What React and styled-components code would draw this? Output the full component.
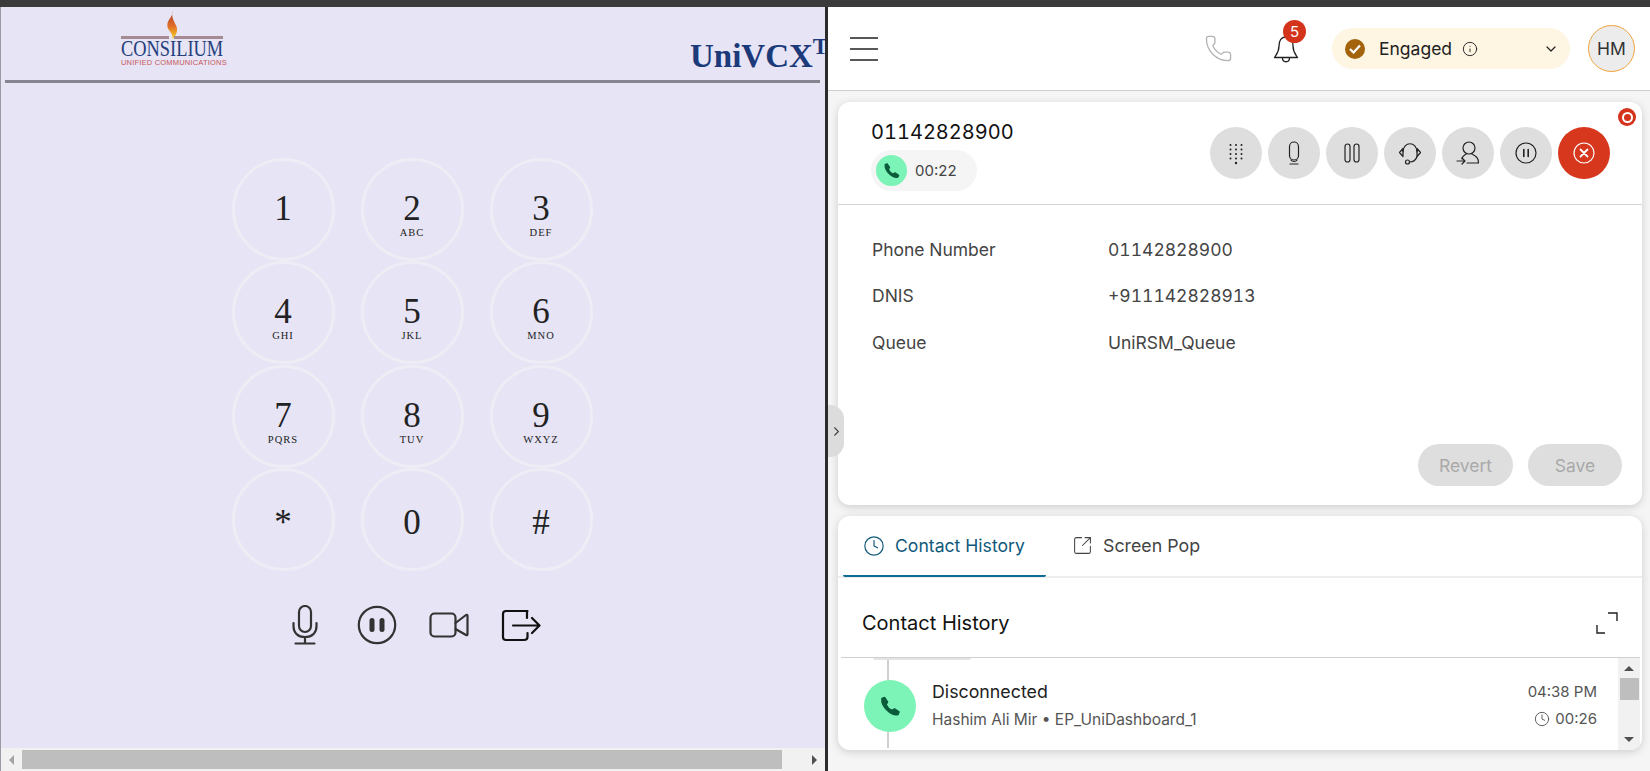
import React from 'react'
import styled, { createGlobalStyle } from 'styled-components'
import { Phone, Info, ChevronDown, Clock, SquareArrowOutUpRight, ChevronRight } from 'lucide-react'

const GlobalStyle = createGlobalStyle`
  html, body { margin: 0; padding: 0; height: 100%; overflow: hidden; }
  * { box-sizing: border-box; }
  body { font-family: "Inter", "Liberation Sans", sans-serif; }
`

const Page = styled.div`
  width: 1650px;
  height: 771px;
  display: flex;
  flex-direction: column;
  background: #f5f5f5;
  position: relative;
`
const TopBar = styled.div`
  height: 7px;
  flex: none;
  background: #3b3b3b;
`
const Split = styled.div`
  flex: 1;
  display: flex;
  min-height: 0;
`

/* left softphone */
const LeftPane = styled.section`
  width: 825px;
  flex: none;
  display: flex;
  flex-direction: column;
  background: #e6e4f5;
  border-left: 1px solid #9a9aa5;
  overflow: hidden;
  font-family: "Liberation Serif", "Times New Roman", serif;
`
const LeftHeader = styled.header`
  height: 73px;
  flex: none;
  display: flex;
  overflow: hidden;
  position: relative;
`
const Logo = styled.div`
  width: 102px;
  margin-left: 120px;
  flex: none;
  padding-top: 4px;
  display: flex;
  flex-direction: column;
  align-items: center;
`
const LogoRule = styled.div`
  width: 100%;
  height: 3px;
  margin-top: -3px;
  background: linear-gradient(to right, #a58a94 0 47%, transparent 47% 52%, #a58a94 52% 100%);
`
const LogoName = styled.div`
  width: 102px;
  color: #253f7c;
  font-size: 23px;
  line-height: 20px;
  white-space: nowrap;
  transform: scaleX(0.8);
  transform-origin: left center;
`
const LogoSub = styled.div`
  width: 102px;
  color: #c9585a;
  font-family: "Liberation Sans", sans-serif;
  font-size: 7.5px;
  letter-spacing: 0.2px;
  line-height: 8px;
  white-space: nowrap;
`
const Brand = styled.div`
  margin-left: 467px;
  flex: none;
  padding-top: 30px;
  color: #1c3a7a;
  font-size: 33px;
  font-weight: 700;
  line-height: 38px;
  white-space: nowrap;
`
const Sup = styled.span`
  font-size: 23px;
  line-height: 0;
  position: relative;
  top: -13px;
`
const LeftRule = styled.hr`
  width: 815px;
  height: 3px;
  margin: 0 0 0 4px;
  flex: none;
  border: 0;
  background: #85858f;
`
const LeftBody = styled.div`
  flex: 1;
  display: flex;
  flex-direction: column;
  align-items: center;
  padding: 75px 2px 0 0;
`
const Keypad = styled.div`
  display: grid;
  grid-template-columns: repeat(3, 103px);
  grid-auto-rows: 103.4px;
  column-gap: 26px;
`
const Key = styled.div`
  height: 103px;
  border: 3px solid #eeedf5;
  border-radius: 50%;
  display: flex;
  flex-direction: column;
  align-items: center;
  padding-top: ${p => (p.$low ? 34 : 30)}px;
  color: #222;
`
const Digit = styled.div`
  font-size: 35px;
  line-height: 36px;
`
const Letters = styled.div`
  font-size: 10.5px;
  letter-spacing: 1px;
  line-height: 12px;
`
const Controls = styled.div`
  display: flex;
  gap: 32px;
  margin: 33px 0 0 1px;
  color: #333;
`
const CtlIcon = styled.svg`
  width: 40px;
  height: 40px;
  fill: none;
  stroke: currentColor;
  stroke-width: 2.2;
  stroke-linecap: round;
  stroke-linejoin: round;
`
const HScroll = styled.div`
  height: 23px;
  flex: none;
  display: flex;
  align-items: center;
  background: #f1f1f1;
  padding: 0 8px;
`
const HThumb = styled.div`
  width: 760px;
  height: 19px;
  margin: 0 auto 0 8px;
  background: #bebebe;
`
const ArrowH = styled.div`
  width: 0;
  height: 0;
  border-top: 5px solid transparent;
  border-bottom: 5px solid transparent;
  ${p => (p.$right ? 'border-left: 5px solid #505050;' : 'border-right: 5px solid #a3a3a3;')}
`
const Divider = styled.div`
  width: 3px;
  flex: none;
  background: #2b2b2b;
`

/* right agent desk */
const RightPane = styled.section`
  flex: 1;
  display: flex;
  flex-direction: column;
  min-width: 0;
  position: relative;
  color: #444;
`
const Handle = styled.button`
  position: absolute;
  z-index: 3;
  left: 0;
  top: 398px;
  width: 16px;
  height: 52px;
  padding: 0;
  border: 0;
  border-radius: 0 14px 14px 0;
  background: #dcdcdc;
  display: flex;
  align-items: center;
  justify-content: center;
  color: #444;
`
const TopNav = styled.header`
  height: 84px;
  flex: none;
  display: flex;
  align-items: center;
  background: #fff;
  border-bottom: 1.5px solid #cfcfcf;
  padding: 0 15px 0 22px;
`
const Burger = styled.svg`
  width: 28px;
  height: 24px;
  stroke: #222;
  stroke-width: 1.6;
  margin-right: auto;
`
const NavPhone = styled.div`
  display: flex;
  color: #b4b4b4;
  margin-right: 39px;
`
const BellWrap = styled.div`
  position: relative;
  display: flex;
  width: 28px;
  color: #222;
  margin-right: 32px;
`
const CountBadge = styled.span`
  position: absolute;
  top: -14px;
  right: -6px;
  width: 23px;
  height: 23px;
  border-radius: 50%;
  background: #d4341c;
  color: #fff;
  font-size: 15px;
  display: flex;
  align-items: center;
  justify-content: center;
`
const StatusPill = styled.div`
  width: 238px;
  height: 41px;
  border-radius: 21px;
  background: #fef5e3;
  display: flex;
  align-items: center;
  padding: 0 11px 0 13px;
  color: #222;
  font-size: 17.5px;
  margin-right: 18px;
`
const StatusDot = styled.span`
  width: 20px;
  height: 20px;
  border-radius: 50%;
  background: #a3620c;
  display: flex;
  align-items: center;
  justify-content: center;
  margin-right: 14px;
`
const StatusText = styled.span`
  margin-right: 10px;
`
const Avatar = styled.div`
  width: 47px;
  height: 47px;
  border-radius: 50%;
  border: 1.5px solid #f0a43a;
  background: #ececec;
  color: #333;
  font-size: 17.5px;
  display: flex;
  align-items: center;
  justify-content: center;
`
const Content = styled.div`
  flex: 1;
  display: flex;
  flex-direction: column;
  gap: 11px;
  padding: 11px 8px 21px 10px;
  min-height: 0;
`
const Card = styled.div`
  background: #fff;
  border-radius: 12px;
  box-shadow: 0 2px 8px rgba(0, 0, 0, 0.16);
  display: flex;
  flex-direction: column;
  position: relative;
  overflow: hidden;
  height: ${p => p.$h}px;
  flex: none;
`
const CallHead = styled.div`
  height: 103px;
  flex: none;
  border-bottom: 1.5px solid #d4d4d4;
  display: flex;
  align-items: flex-start;
  justify-content: space-between;
  padding: 15px 32px 0 33px;
`
const CallInfo = styled.div`
  display: flex;
  flex-direction: column;
`
const CallNumber = styled.div`
  color: #111;
  font-size: 20px;
  font-variant-numeric: tabular-nums;
  line-height: 30px;
`
const TimerPill = styled.div`
  width: 106px;
  height: 41px;
  margin-top: 3px;
  border-radius: 21px;
  background: #f5f5f5;
  display: flex;
  align-items: center;
  padding-left: 5px;
  gap: 8px;
  font-size: 15px;
`
const GreenDot = styled.span`
  width: ${p => p.$size}px;
  height: ${p => p.$size}px;
  flex: none;
  border-radius: 50%;
  background: #7cf3b7;
  display: flex;
  align-items: center;
  justify-content: center;
  position: relative;
  z-index: 1;
`
const CallActions = styled.div`
  display: flex;
  gap: 6px;
  margin-top: 10px;
`
const RoundBtn = styled.button`
  width: 52px;
  height: 52px;
  padding: 0;
  border: 0;
  border-radius: 50%;
  background: ${p => (p.$danger ? '#d6371d' : '#dedede')};
  color: ${p => (p.$danger ? '#fff' : '#222')};
  display: flex;
  align-items: center;
  justify-content: center;
`
const BtnIcon = styled.svg`
  width: 28px;
  height: 28px;
  fill: none;
  stroke: currentColor;
  stroke-width: 1.2;
  stroke-linecap: round;
  stroke-linejoin: round;
`
const RecBadge = styled.span`
  position: absolute;
  top: 6px;
  right: 6px;
  width: 18px;
  height: 18px;
  border-radius: 50%;
  background: #d4341c;
  display: flex;
  align-items: center;
  justify-content: center;
  &::after {
    content: '';
    width: 7px;
    height: 7px;
    border-radius: 50%;
    border: 2px solid #fff;
  }
`
const Fields = styled.div`
  display: grid;
  grid-template-columns: 236px 1fr;
  grid-auto-rows: 46.5px;
  align-items: center;
  padding: 21px 0 0 34px;
  font-size: 17.5px;
  font-variant-numeric: tabular-nums;
`
const Footer = styled.div`
  margin-top: auto;
  display: flex;
  justify-content: flex-end;
  gap: 15px;
  padding: 0 20px 19px 0;
`
const GhostBtn = styled.button`
  width: ${p => p.$w}px;
  height: 42px;
  padding: 0;
  border: 0;
  border-radius: 21px;
  background: #dedede;
  color: #a9a9a9;
  font-family: inherit;
  font-size: 17.5px;
`
const Tabs = styled.div`
  height: 62px;
  flex: none;
  display: flex;
  border-bottom: 2px solid #eee;
  padding-left: 5px;
`
const Tab = styled.div`
  width: ${p => p.$w}px;
  height: 61px;
  display: flex;
  align-items: center;
  gap: 10px;
  padding-left: ${p => p.$pad}px;
  font-size: ${p => (p.$active ? 17.6 : 17.8)}px;
  color: ${p => (p.$active ? '#10597a' : '#444')};
  border-bottom: 2px solid ${p => (p.$active ? '#0f6a94' : 'transparent')};
  border-radius: 0 0 2px 2px;
`
const SectionHead = styled.div`
  height: 80px;
  flex: none;
  margin: 0 2px 0 3px;
  display: flex;
  align-items: center;
  justify-content: space-between;
  border-bottom: 1.5px solid #d0d0d0;
  padding: 20px 22px 9px 21px;
  color: #111;
  font-size: 20px;
`
const CornerIcon = styled.svg`
  width: 22px;
  height: 22px;
  fill: none;
  stroke: #222;
  stroke-width: 1.4;
`
const HistoryList = styled.div`
  flex: 1;
  display: flex;
  min-height: 0;
  margin: 0 2px 0 3px;
`
const HistoryRow = styled.div`
  flex: 1;
  display: flex;
  align-items: flex-start;
  padding: 22px 21px 0 23px;
  position: relative;
  &::before {
    content: '';
    position: absolute;
    left: 46px;
    top: 0;
    bottom: 2px;
    width: 2px;
    background: #d0d0d0;
  }
  &::after {
    content: '';
    position: absolute;
    left: 32px;
    top: 0;
    width: 98px;
    height: 2px;
    background: #e4e4e4;
    border-radius: 0 0 4px 4px;
  }
`
const RowText = styled.div`
  margin-left: 16px;
  flex: 1;
  display: flex;
  flex-direction: column;
`
const RowTitle = styled.div`
  color: #222;
  font-size: 17.8px;
  line-height: 24px;
`
const RowSub = styled.div`
  color: #555;
  font-size: 15.5px;
  line-height: 20px;
  margin-top: 6px;
`
const RowMeta = styled.div`
  display: flex;
  flex-direction: column;
  align-items: flex-end;
  color: #555;
  font-size: 15px;
  line-height: 24px;
`
const MetaTime = styled.div`
  display: flex;
  align-items: center;
  gap: 5px;
  margin-top: 3px;
`
const VScroll = styled.div`
  width: 22px;
  flex: none;
  display: flex;
  flex-direction: column;
  align-items: center;
  padding: 8px 0;
  background: #f1f1f1;
`
const VThumb = styled.div`
  width: 19px;
  height: 22px;
  margin: 7px 0 auto;
  background: #bebebe;
`
const ArrowV = styled.div`
  width: 0;
  height: 0;
  border-left: 5px solid transparent;
  border-right: 5px solid transparent;
  ${p => (p.$down ? 'border-top: 5px solid #505050;' : 'border-bottom: 5px solid #505050;')}
`

const keys = [
  ['1', ''], ['2', 'ABC'], ['3', 'DEF'],
  ['4', 'GHI'], ['5', 'JKL'], ['6', 'MNO'],
  ['7', 'PQRS'], ['8', 'TUV'], ['9', 'WXYZ'],
  ['*', '', true], ['0', '', true], ['#', '', true],
]

function SolidPhone({ size }) {
  return (
    <svg width={size} height={size} viewBox="0 0 24 24" fill="#0b5c3a" stroke="#0b5c3a" strokeWidth="1.6" strokeLinejoin="round">
      <path d="M6.5 3.5 L9.5 8 L8 10.5 C9 13 11.5 15.5 14 16.5 L16.5 15 L21 18 L20 20.5 C13 22 3 12 4 4.5 Z" />
    </svg>
  )
}

function Flame() {
  return (
    <svg width="13" height="28" viewBox="0 0 12 27">
      <defs>
        <linearGradient id="flame" x1="0" y1="0" x2="0" y2="1">
          <stop offset="0" stopColor="#a83a2a" />
          <stop offset="0.55" stopColor="#e2702a" />
          <stop offset="1" stopColor="#f5d21e" />
        </linearGradient>
      </defs>
      <path d="M6 0 C7 5 1 8 1 14 C1 19 7 21 6 27 C10 23 11.5 19 9.5 14 C7 9 5 6 6 0 Z" fill="url(#flame)" />
    </svg>
  )
}

export default function App() {
  return (
    <Page>
      <GlobalStyle />
      <TopBar />
      <Split>
        <LeftPane>
          <LeftHeader>
            <Logo>
              <Flame />
              <LogoRule />
              <LogoName>CONSILIUM</LogoName>
              <LogoSub>UNIFIED COMMUNICATIONS</LogoSub>
            </Logo>
            <Brand>UniVCX<Sup>TM</Sup></Brand>
          </LeftHeader>
          <LeftRule />
          <LeftBody>
            <Keypad>
              {keys.map(([d, l, low]) => (
                <Key key={d} $low={low}>
                  <Digit>{d}</Digit>
                  {l && <Letters>{l}</Letters>}
                </Key>
              ))}
            </Keypad>
            <Controls>
              <CtlIcon viewBox="0 0 40 40">
                <rect x="14" y="1" width="12" height="26" rx="6" />
                <path d="M8.5 18 V21 C8.5 28 13 32 20 32 C27 32 31.5 28 31.5 21 V18" />
                <path d="M20 32 V38 M10.5 38.5 H29.5" />
              </CtlIcon>
              <CtlIcon viewBox="0 0 40 40">
                <circle cx="20" cy="20" r="18.2" />
                <rect x="12.5" y="13" width="5" height="14" rx="2.5" fill="currentColor" stroke="none" />
                <rect x="22.5" y="13" width="5" height="14" rx="2.5" fill="currentColor" stroke="none" />
              </CtlIcon>
              <CtlIcon viewBox="0 0 40 40">
                <rect x="1.5" y="8.5" width="25" height="23" rx="4" />
                <path d="M26.5 18 L37 10 C38 9.5 38.5 10 38.5 11 V29 C38.5 30 38 30.5 37 30 L26.5 24" />
              </CtlIcon>
              <CtlIcon viewBox="0 0 40 40" style={{ color: '#111' }}>
                <path d="M26.5 6 H5 C3 6 2 7 2 9 V32 C2 34 3 35 5 35 H23 C25 35 26.5 34 26.5 32 V28" />
                <path d="M26 13 V6 M12 20.5 H38 M31 13 L38.5 20.5 L31 28" />
              </CtlIcon>
            </Controls>
          </LeftBody>
          <HScroll>
            <ArrowH />
            <HThumb />
            <ArrowH $right />
          </HScroll>
        </LeftPane>
        <Divider />
        <RightPane>
          <Handle><ChevronRight size={15} strokeWidth={1.7} /></Handle>
          <TopNav>
            <Burger viewBox="0 0 28 24">
              <path d="M0 1 H28 M0 12 H28 M0 23 H28" />
            </Burger>
            <NavPhone><Phone size={29} strokeWidth={1.1} /></NavPhone>
            <BellWrap>
              <svg width="28" height="30" viewBox="0 0 28 30" fill="none" stroke="currentColor" strokeWidth="1.3" strokeLinejoin="round">
                <path d="M14 3 C9 3 7 7 7 12 C7 18 5 20 2.5 23.5 H25.5 C23 20 21 18 21 12 C21 7 19 3 14 3 Z" />
                <path d="M10.5 24 C10.5 29 17.5 29 17.5 24" />
              </svg>
              <CountBadge>5</CountBadge>
            </BellWrap>
            <StatusPill>
              <StatusDot>
                <svg width="12" height="10" viewBox="0 0 12 10" fill="none" stroke="#fff" strokeWidth="2.2">
                  <path d="M1 5 L4.5 8.5 L11 1.5" />
                </svg>
              </StatusDot>
              <StatusText>Engaged</StatusText>
              <Info size={16} strokeWidth={1.4} />
              <ChevronDown size={16} strokeWidth={1.8} style={{ marginLeft: 'auto' }} />
            </StatusPill>
            <Avatar>HM</Avatar>
          </TopNav>
          <Content>
            <Card $h={403}>
              <RecBadge />
              <CallHead>
                <CallInfo>
                  <CallNumber>01142828900</CallNumber>
                  <TimerPill>
                    <GreenDot $size={31}><SolidPhone size={19} /></GreenDot>
                    00:22
                  </TimerPill>
                </CallInfo>
                <CallActions>
                  <RoundBtn>
                    <BtnIcon viewBox="0 0 28 28">
                      {[6, 10.5, 15, 19.5].flatMap(y => [8.5, 14, 19.5].map(x => (
                        <circle key={x + '-' + y} cx={x} cy={y} r="1" fill="currentColor" stroke="none" />
                      )))}
                      <circle cx="14" cy="24" r="1.2" fill="currentColor" stroke="none" />
                    </BtnIcon>
                  </RoundBtn>
                  <RoundBtn>
                    <BtnIcon viewBox="0 0 28 28">
                      <rect x="9.5" y="3" width="9" height="18" rx="4.5" />
                      <path d="M11 21 C12 23 16 23 17 21 M10 25 H18" />
                    </BtnIcon>
                  </RoundBtn>
                  <RoundBtn>
                    <BtnIcon viewBox="0 0 28 28">
                      <rect x="7" y="5" width="5" height="18" rx="2.5" />
                      <rect x="16" y="5" width="5" height="18" rx="2.5" />
                    </BtnIcon>
                  </RoundBtn>
                  <RoundBtn>
                    <BtnIcon viewBox="0 0 28 28">
                      <path d="M7 13 C7 2 21 2 21 13" />
                      <path d="M7 9.5 L3.5 13.5 L7 17.5 Z M21 9.5 L24.5 13.5 L21 17.5 Z" />
                      <path d="M21 17.5 C20 21 17 23 13.5 23" />
                      <circle cx="11.5" cy="23" r="2" />
                    </BtnIcon>
                  </RoundBtn>
                  <RoundBtn>
                    <BtnIcon viewBox="0 0 28 28">
                      <circle cx="15" cy="9" r="6" />
                      <path d="M12 15 C9 17 8 18 8 20 M18 15 C22 17 25 20 24.5 24 H13" />
                      <path d="M3 22 H11 M8 19 L11 22 L8 25" />
                    </BtnIcon>
                  </RoundBtn>
                  <RoundBtn>
                    <BtnIcon viewBox="0 0 28 28">
                      <circle cx="14" cy="14" r="10" />
                      <path d="M11.8 10.5 V17.5 M16.2 10.5 V17.5" strokeWidth="1.6" />
                    </BtnIcon>
                  </RoundBtn>
                  <RoundBtn $danger>
                    <BtnIcon viewBox="0 0 28 28">
                      <circle cx="14" cy="14" r="10" />
                      <path d="M10.5 10.5 L17.5 17.5 M17.5 10.5 L10.5 17.5" strokeWidth="1.8" />
                    </BtnIcon>
                  </RoundBtn>
                </CallActions>
              </CallHead>
              <Fields>
                <span>Phone Number</span><span>01142828900</span>
                <span>DNIS</span><span>+911142828913</span>
                <span>Queue</span><span>UniRSM_Queue</span>
              </Fields>
              <Footer>
                <GhostBtn $w={95}>Revert</GhostBtn>
                <GhostBtn $w={94}>Save</GhostBtn>
              </Footer>
            </Card>
            <Card $h={234}>
              <Tabs>
                <Tab $active $w={203} $pad={20}><Clock size={22} strokeWidth={1.3} />Contact History</Tab>
                <Tab $w={160} $pad={26}><SquareArrowOutUpRight size={21} strokeWidth={1.2} />Screen Pop</Tab>
              </Tabs>
              <SectionHead>
                Contact History
                <CornerIcon viewBox="0 0 22 22">
                  <path d="M12 1 H21 V9 M1 13 V21 H9" />
                </CornerIcon>
              </SectionHead>
              <HistoryList>
                <HistoryRow>
                  <GreenDot $size={52}><SolidPhone size={24} /></GreenDot>
                  <RowText>
                    <RowTitle>Disconnected</RowTitle>
                    <RowSub>Hashim Ali Mir • EP_UniDashboard_1</RowSub>
                  </RowText>
                  <RowMeta>
                    04:38 PM
                    <MetaTime><Clock size={16} strokeWidth={1.4} />00:26</MetaTime>
                  </RowMeta>
                </HistoryRow>
                <VScroll>
                  <ArrowV />
                  <VThumb />
                  <ArrowV $down />
                </VScroll>
              </HistoryList>
            </Card>
          </Content>
        </RightPane>
      </Split>
    </Page>
  )
}
